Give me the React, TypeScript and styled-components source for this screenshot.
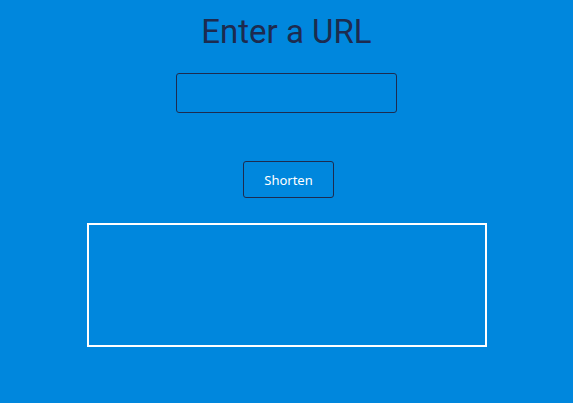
import React from 'react';
import styled, { createGlobalStyle } from 'styled-components';

const GlobalStyle = createGlobalStyle`
    html, body {
        margin: 0;
        padding: 0;
        background: #0087dd;
    }
`;

const Page = styled.div`
    display: flex;
    flex-direction: column;
    align-items: center;
    width: 573px;
    height: 403px;
    background: #0087dd;
`;

const Title = styled.h1`
    margin: 10px 0 0;
    font-family: Roboto, sans-serif;
    font-weight: 400;
    font-size: 33px;
    line-height: 44px;
    color: #1d2b4f;
`;

const UrlInput = styled.input`
    box-sizing: border-box;
    margin-top: 19px;
    width: 221px;
    height: 40px;
    background: transparent;
    border: 1px solid #1d2b4f;
    border-radius: 3px;
    outline: none;
`;

const ShortenButton = styled.button`
    box-sizing: border-box;
    margin: 48px 0 0 4px;
    width: 91px;
    height: 37px;
    background: transparent;
    border: 1px solid #1d2b4f;
    border-radius: 3px;
    color: #fff;
    font-family: "Noto Sans", sans-serif;
    font-size: 13px;
`;

const ResultBox = styled.div`
    box-sizing: border-box;
    margin-top: 25px;
    width: 400px;
    height: 124px;
    border: 2px solid #fff;
`;

const App: React.FC = () => {
    return (
        <Page>
            <GlobalStyle />
            <Title>Enter a URL</Title>
            <UrlInput type="text" />
            <ShortenButton>Shorten</ShortenButton>
            <ResultBox />
        </Page>
    );
};

export default App;
